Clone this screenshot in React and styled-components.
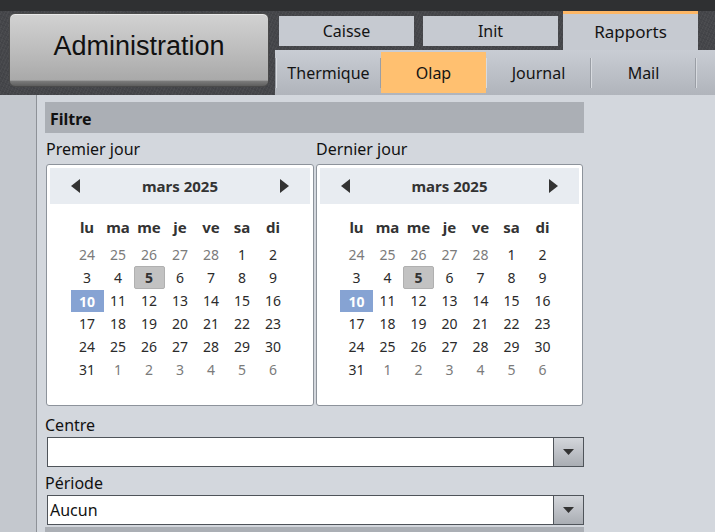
import React from "react";
import styled, { createGlobalStyle, css } from "styled-components";

const Global = createGlobalStyle`
  html, body { margin: 0; padding: 0; }
  body {
    width: 715px; height: 532px; overflow: hidden;
    font-family: "Segoe UI", "Noto Sans", sans-serif;
    background: #d3d7dd;
  }
  * { box-sizing: border-box; }
`;

const Page = styled.div`
  width: 715px;
  height: 532px;
  display: flex;
  flex-direction: column;
  overflow: hidden;
`;

const Header = styled.header`
  height: 95px;
  flex: none;
  display: flex;
  background:
    linear-gradient(#2f3032 0 11px, transparent 11px),
    repeating-linear-gradient(115deg, rgba(255,255,255,0.035) 0 1px, transparent 1px 3px),
    repeating-linear-gradient(25deg, rgba(0,0,0,0.06) 0 1px, transparent 1px 4px),
    #45464a;
`;

const AdminWrap = styled.div`
  padding: 13px 0 0 9px;
  width: 275px;
  flex: none;
`;

const AdminButton = styled.div`
  width: 260px;
  height: 74px;
  border-radius: 6px;
  border: 1px solid #4a4a4a;
  background: linear-gradient(#d2d2d2 0%, #bdbdbd 50%, #a9a9a9 92%, #7c7c7c 93%, #5e5e5e 100%);
  box-shadow: inset 0 1px 0 rgba(255,255,255,0.5);
  display: flex;
  align-items: center;
  justify-content: center;
  padding-bottom: 7px;
  font-family: "Liberation Sans", Arial, sans-serif;
  font-size: 27px;
  color: #111;
`;

const TabsColumn = styled.div`
  flex: 1;
  display: flex;
  flex-direction: column;
`;

const MainTabs = styled.div`
  height: 50px;
  display: flex;
  align-items: flex-start;
  padding-top: 11px;
`;

const MainTab = styled.div`
  width: 135px;
  margin-left: ${p => p.$ml}px;
  display: flex;
  align-items: center;
  justify-content: center;
  font-size: 16px;
  color: #141414;
  background: #c6cad1;
  ${p => p.$active
    ? css`
        height: 39px;
        border-top: 3px solid #fdb766;
        padding-bottom: 1px;
        font-size: 17px;
      `
    : css`
        margin-top: 5px;
        height: 30px;
      `}
`;

const SubBar = styled.div`
  height: 45px;
  display: flex;
  background: linear-gradient(#c9cdd4, #b0b4bb);
`;

const Separator = styled.div`
  width: 2px;
  flex: none;
  margin: 8px 0 7px;
  background: linear-gradient(90deg, #9a9ea5 0 1px, #d8dbe0 1px);
`;

const SubTab = styled.div`
  position: relative;
  width: 103px;
  height: 45px;
  display: flex;
  align-items: center;
  justify-content: center;
  font-size: 16px;
  color: #141414;
  ${p => p.$active && css`
    &::before {
      content: "";
      position: absolute;
      left: -1px; right: -1px; top: 2px; bottom: 2px;
      background: #ffc070;
    }
  `}
  & > span { position: relative; }
`;

const Body = styled.div`
  flex: 1;
  display: flex;
  background: #d3d7dd;
`;

const Sidebar = styled.div`
  width: 37px;
  flex: none;
  background: #c4c8ce;
  border-right: 1px solid #8e9298;
`;

const Main = styled.div`
  padding: 7px 0 0 8px;
  width: 547px;
  display: flex;
  flex-direction: column;
`;

const SectionHeader = styled.div`
  height: 31px;
  flex: none;
  background: #abafb5;
  padding: 2px 0 0 5px;
  display: flex;
  align-items: center;
  font-weight: 700;
  font-size: 16px;
  color: #111;
`;

const CalRow = styled.div`
  display: flex;
  gap: 2px;
  padding-left: 1px;
`;

const CalCol = styled.div`
  width: ${p => p.$w}px;
  display: flex;
  flex-direction: column;
`;

const Label = styled.div`
  height: ${p => p.$h}px;
  padding-top: ${p => p.$pt}px;
  font-size: 16px;
  line-height: 22px;
  color: #111;
  display: flex;
  align-items: ${p => (p.$center ? "center" : "flex-start")};
`;

const Calendar = styled.div`
  height: 242px;
  border: 1px solid #8d939b;
  border-radius: 3px;
  background: #ffffff;
  padding: 3px;
  display: flex;
  flex-direction: column;
`;

const CalHeader = styled.div`
  height: 36px;
  background: #e8ecf1;
  display: flex;
  align-items: center;
  justify-content: space-between;
  padding: 0 21px;
`;

const MonthTitle = styled.div`
  font-weight: 700;
  font-size: 15px;
  color: #333;
`;

const Arrow = ({ dir }) => (
  <svg width="9" height="14" viewBox="0 0 9 14">
    {dir === "left"
      ? <polygon points="9,0 9,14 0,7" fill="#333" />
      : <polygon points="0,0 0,14 9,7" fill="#333" />}
  </svg>
);

const Grid = styled.div`
  align-self: center;
  display: grid;
  grid-template-columns: repeat(7, 31px);
  grid-auto-rows: 23px;
  margin-top: ${p => p.$mt}px;
`;

const DayName = styled.div`
  display: flex;
  align-items: center;
  justify-content: center;
  font-weight: 700;
  font-size: 15px;
  color: #333;
`;

const Day = styled.div`
  display: flex;
  align-items: center;
  justify-content: center;
  font-size: 14px;
  color: ${p => (p.$other ? "#7b7b7b" : "#2b2b2b")};
  ${p => p.$today && css`
    background: #c2c2c2;
    border: 1px solid #b0b0b0;
    border-radius: 2px;
    font-weight: 700;
    color: #333;
  `}
  ${p => p.$selected && css`
    background: #86a3d3;
    color: #fff;
    font-weight: 700;
    margin: 1px -1px 0 -1px;
  `}
`;

const Select = styled.div`
  height: 30px;
  margin-left: 2px;
  width: 537px;
  border: 1px solid #4f545a;
  background: #fff;
  display: flex;
`;

const SelectText = styled.div`
  flex: 1;
  padding-left: 2px;
  display: flex;
  align-items: center;
  font-size: 16px;
  color: #111;
`;

const SelectButton = styled.div`
  width: 30px;
  border-left: 1px solid #4f545a;
  background: linear-gradient(#d3d6db, #a9adb3);
  display: flex;
  align-items: center;
  justify-content: center;
`;

const BottomBar = styled.div`
  margin-top: 2px;
  height: 12px;
  background: #abafb5;
`;

const DAY_NAMES = ["lu", "ma", "me", "je", "ve", "sa", "di"];

function buildDays() {
  const days = [];
  [24, 25, 26, 27, 28].forEach(d => days.push({ d, other: true }));
  for (let d = 1; d <= 31; d++) days.push({ d, today: d === 5, selected: d === 10 });
  [1, 2, 3, 4, 5, 6].forEach(d => days.push({ d, other: true }));
  return days;
}

const DAYS = buildDays();

function Cal() {
  return (
    <Calendar>
      <CalHeader>
        <Arrow dir="left" />
        <MonthTitle>mars 2025</MonthTitle>
        <Arrow dir="right" />
      </CalHeader>
      <Grid $mt={11}>
        {DAY_NAMES.map(n => <DayName key={n}>{n}</DayName>)}
      </Grid>
      <Grid $mt={5}>
        {DAYS.map((x, i) => (
          <Day key={i} $other={x.other} $today={x.today} $selected={x.selected}>{x.d}</Day>
        ))}
      </Grid>
    </Calendar>
  );
}

const Caret = () => (
  <svg width="11" height="6" viewBox="0 0 11 6">
    <polygon points="0,0 11,0 5.5,6" fill="#333" />
  </svg>
);

const SUB_TABS = ["Thermique", "Olap", "Journal", "Mail"];

export default function App() {
  return (
    <Page>
      <Global />
      <Header>
        <AdminWrap>
          <AdminButton>Administration</AdminButton>
        </AdminWrap>
        <TabsColumn>
          <MainTabs>
            <MainTab $ml={4}>Caisse</MainTab>
            <MainTab $ml={9}>Init</MainTab>
            <MainTab $ml={5} $active>Rapports</MainTab>
          </MainTabs>
          <SubBar>
            <Separator />
            {SUB_TABS.map(t => (
              <React.Fragment key={t}>
                <SubTab $active={t === "Olap"}><span>{t}</span></SubTab>
                <Separator />
              </React.Fragment>
            ))}
          </SubBar>
        </TabsColumn>
      </Header>
      <Body>
        <Sidebar />
        <Main>
          <SectionHeader>Filtre</SectionHeader>
          <CalRow>
            <CalCol $w={268}>
              <Label $h={31} $pt={0} $center>Premier jour</Label>
              <Cal />
            </CalCol>
            <CalCol $w={267}>
              <Label $h={31} $pt={0} $center>Dernier jour</Label>
              <Cal />
            </CalCol>
          </CalRow>
          <Label $h={31} $pt={8}>Centre</Label>
          <Select>
            <SelectText />
            <SelectButton><Caret /></SelectButton>
          </Select>
          <Label $h={28} $pt={5}>Période</Label>
          <Select>
            <SelectText>Aucun</SelectText>
            <SelectButton><Caret /></SelectButton>
          </Select>
          <BottomBar />
        </Main>
      </Body>
    </Page>
  );
}
